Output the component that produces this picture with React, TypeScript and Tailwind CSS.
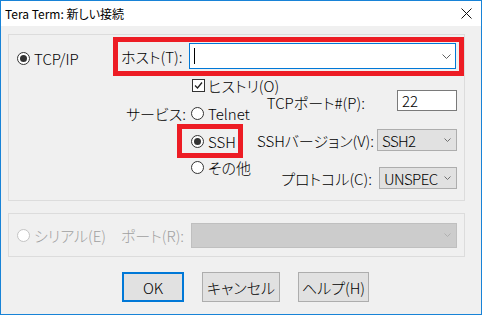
import React from 'react';

function Radio({ checked = false, disabled = false }: { checked?: boolean; disabled?: boolean }) {
  return (
    <div
      className={`w-[13px] h-[13px] shrink-0 rounded-full border bg-white flex items-center justify-center ${
        disabled ? 'border-[#c4c4c4]' : 'border-[#333333]'
      }`}
    >
      {checked && <div className="w-[7px] h-[7px] rounded-full bg-[#333333]" />}
    </div>
  );
}

function Checkbox() {
  return (
    <div className="w-[13px] h-[13px] shrink-0 border border-[#333333] bg-white flex items-center justify-center">
      <svg width="11" height="11" viewBox="0 0 11 11">
        <path d="M2 5.5 L4.5 8 L9 2.5" fill="none" stroke="#222222" strokeWidth="1.3" />
      </svg>
    </div>
  );
}

function Chevron({ color = '#606060', small = false }: { color?: string; small?: boolean }) {
  return small ? (
    <svg width="7" height="4" viewBox="0 0 7 4">
      <path d="M0.5 0.5 L3.5 3.5 L6.5 0.5" fill="none" stroke={color} />
    </svg>
  ) : (
    <svg width="9" height="5" viewBox="0 0 9 5">
      <path d="M0.5 0.5 L4.5 4.5 L8.5 0.5" fill="none" stroke={color} />
    </svg>
  );
}

function Select({ value, width }: { value: string; width: string }) {
  return (
    <div
      className={`${width} h-[22px] border border-[#adadad] bg-[#e1e1e1] flex items-center justify-between pl-[4px] pr-[5px]`}
    >
      <span className="whitespace-nowrap tracking-[-0.6px]">{value}</span>
      <Chevron small color="#707070" />
    </div>
  );
}

export default function App() {
  return (
    <div className="w-[482px] h-[315px] border border-[#1883d7] bg-[#f0f0f0] flex flex-col text-[15px] font-light leading-none text-black font-['Noto_Sans_CJK_JP','Noto_Sans',sans-serif] [font-feature-settings:'palt']">
      {/* Title bar */}
      <div className="h-[25px] shrink-0 bg-white flex items-center justify-between">
        <span className="pl-[4px] text-[12px] font-normal">Tera Term: 新しい接続</span>
        <div className="w-[30px] h-full flex items-center justify-center">
          <svg width="11" height="11" viewBox="0 0 11 11">
            <path d="M0.5 0.5 L10.5 10.5 M10.5 0.5 L0.5 10.5" stroke="#111111" strokeWidth="1" />
          </svg>
        </div>
      </div>

      <div className="flex-1 pl-[7px] pt-[8px] flex flex-col">
        {/* TCP/IP group */}
        <div className="w-[457px] h-[167px] border border-[#dcdcdc] flex flex-col">
          <div className="flex mt-[2px]">
            <div className="w-[106px] h-[39px] pl-[8px] pt-[3px] flex items-center gap-[4px]">
              <Radio checked />
              <span>TCP/IP</span>
            </div>
            <div className="w-[351px] h-[39px] shrink-0 border-[5px] border-[#ed1c24] flex items-start pt-[1px]">
              <div className="w-[71px] h-[26px] pl-[3px] flex items-center whitespace-nowrap">ホスト(T):</div>
              <div className="w-[267px] h-[26px] border border-[#0078d7] bg-white flex items-center justify-between pl-[4px] pr-[4px]">
                <div className="w-px h-[16px] bg-black" />
                <Chevron />
              </div>
            </div>
          </div>

          <div className="flex">
            {/* service options */}
            <div className="w-[237px] flex flex-col">
              <div className="h-[18px] flex items-center">
                <div className="w-[183px] shrink-0" />
                <Checkbox />
                <span className="ml-[3px] whitespace-nowrap">ヒストリ(O)</span>
              </div>
              <div className="h-[20px] mt-[9px] flex items-center">
                <div className="w-[182px] shrink-0 pr-[5px] flex justify-end">サービス:</div>
                <Radio />
                <span className="ml-[4px] whitespace-nowrap">Telnet</span>
              </div>
              <div className="h-[34px] mt-[1px] flex">
                <div className="w-[182px] shrink-0" />
                <div className="-ml-[14px] w-[66px] h-[34px] shrink-0 border-[5px] border-[#ed1c24] pl-[9px] flex items-center gap-[4px]">
                  <Radio checked />
                  <span>SSH</span>
                </div>
              </div>
              <div className="h-[18px] flex items-center">
                <div className="w-[182px] shrink-0" />
                <Radio />
                <span className="ml-[4px] whitespace-nowrap">その他</span>
              </div>
            </div>

            {/* connection settings */}
            <div className="w-[211px] flex flex-col items-end">
              <div className="h-[21px] mt-[14px] flex items-center justify-end">
                <span className="mt-[4px] mr-[32px] whitespace-nowrap">TCPポート#(P):</span>
                <div className="w-[60px] h-[21px] border border-[#7a7a7a] bg-white flex items-center pl-[4px]">22</div>
              </div>
              <div className="h-[22px] mt-[18px] flex items-center justify-end">
                <span className="mr-[3px] whitespace-nowrap">SSHバージョン(V):</span>
                <Select value="SSH2" width="w-[80px]" />
              </div>
              <div className="h-[22px] mt-[16px] flex items-center justify-end">
                <span className="mr-[7px] whitespace-nowrap">プロトコル(C):</span>
                <Select value="UNSPEC" width="w-[78px]" />
              </div>
            </div>
          </div>
        </div>

        {/* Serial group */}
        <div className="w-[457px] h-[44px] mt-[12px] border border-[#dcdcdc] flex items-center text-[#a0a0a0]">
          <div className="w-[112px] pl-[8px] flex items-center gap-[4px]">
            <Radio disabled />
            <span className="whitespace-nowrap">シリアル(E)</span>
          </div>
          <div className="w-[70px] whitespace-nowrap">ポート(R):</div>
          <div className="w-[266px] h-[25px] border border-[#bfbfbf] bg-[#cccccc] flex items-center justify-end pr-[5px]">
            <Chevron small color="#b0b0b0" />
          </div>
        </div>

        {/* Buttons */}
        <div className="mt-[15px] ml-[114px] flex gap-[18px]">
          <button className="w-[62px] h-[30px] border-2 border-[#0078d7] bg-[#e1e1e1] flex items-center justify-center">
            OK
          </button>
          <button className="w-[78px] h-[30px] border border-[#adadad] bg-[#e1e1e1] flex items-center justify-center">
            キャンセル
          </button>
          <button className="w-[71px] h-[30px] border border-[#adadad] bg-[#e1e1e1] flex items-center justify-center">
            ヘルプ(H)
          </button>
        </div>
      </div>
    </div>
  );
}
